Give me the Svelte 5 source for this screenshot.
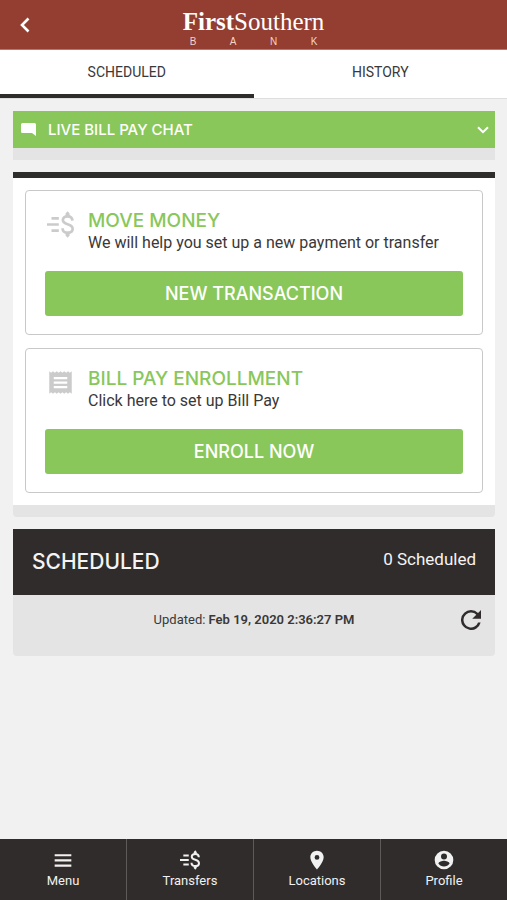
<script lang="ts">
	type Tab = 'scheduled' | 'history';

	let activeTab: Tab = $state('scheduled');
	let updatedAt = $state('Feb 19, 2020 2:36:27 PM');

	const TABS: { id: Tab; label: string }[] = [
		{ id: 'scheduled', label: 'SCHEDULED' },
		{ id: 'history', label: 'HISTORY' },
	];

	const ACTIONS = [
		{
			icon: 'transfer',
			title: 'MOVE MONEY',
			text: 'We will help you set up a new payment or transfer',
			button: 'NEW TRANSACTION',
		},
		{
			icon: 'receipt',
			title: 'BILL PAY ENROLLMENT',
			text: 'Click here to set up Bill Pay',
			button: 'ENROLL NOW',
		},
	];

	const NAV = [
		{ icon: 'menu', label: 'Menu' },
		{ icon: 'transfer', label: 'Transfers' },
		{ icon: 'pin', label: 'Locations' },
		{ icon: 'profile', label: 'Profile' },
	];

	function refresh() {
		const now = new Date();
		const day = now.toLocaleDateString('en-US', { month: 'short', day: 'numeric', year: 'numeric' });
		updatedAt = `${day} ${now.toLocaleTimeString('en-US')}`;
	}
</script>

{#snippet icon(name: string)}
	<svg class="icon" viewBox="0 0 24 24" aria-hidden="true">
		{#if name === 'transfer'}
			<path
				d="M4 6.500h6.500M0 12h10.500M4 17.500h6.500"
				fill="none"
				stroke="currentColor"
				stroke-width="2.400"
			/>
			<path
				d="M22.600 8.600C22.500 6 20.700 4.700 18.300 4.700c-2.500 0-4.200 1.400-4.200 3.400 0 2.200 1.700 3 4.200 3.700 2.700.8 4.500 1.700 4.500 4 0 2.200-1.900 3.500-4.500 3.500-2.600 0-4.400-1.400-4.500-4"
				fill="none"
				stroke="currentColor"
				stroke-width="2.400"
			/>
			<path d="M16.500 4.500V2.300L18.300.3l1.800 2v2.200zM16.500 19.500v2.200l1.800 2 1.800-2v-2.200z" />
		{:else if name === 'receipt'}
			<path
				d="M18 17H6v-2h12v2zm0-4H6v-2h12v2zm0-4H6V7h12v2zM2 22l1.700-1.300L5.300 22 7 20.700 8.700 22l1.600-1.300L12 22l1.700-1.300 1.600 1.300 1.700-1.300 1.700 1.300 1.600-1.300L22 22V2l-1.700 1.300L18.700 2 17 3.300 15.300 2l-1.600 1.300L12 2l-1.700 1.300L8.700 2 7 3.300 5.300 2 3.700 3.300 2 2v20z"
			/>
		{:else if name === 'menu'}
			<path d="M2 20h20v-2.600H2V20zm0-6.200h20v-2.600H2v2.600zM2 5v2.600h20V5H2z" />
		{:else if name === 'pin'}
			<path
				d="M12 1C7.600 1 4 4.400 4 8.700 4 14.500 12 23.500 12 23.500s8-9 8-14.800C20 4.400 16.400 1 12 1zm0 10.800a2.900 2.900 0 1 1 0-5.800 2.900 2.900 0 0 1 0 5.800z"
			/>
		{:else if name === 'profile'}
			<path
				fill-rule="evenodd"
				d="M12 .8a11.200 11.200 0 1 0 0 22.400A11.200 11.200 0 0 0 12 .8zm0 3.300a3.600 3.600 0 1 1 0 7.200 3.600 3.600 0 0 1 0-7.200zm0 15.700c-2.800 0-5.300-1.400-6.700-3.600.1-2.200 4.500-3.400 6.700-3.400s6.600 1.200 6.700 3.400c-1.400 2.200-3.900 3.600-6.700 3.600z"
			/>
		{/if}
	</svg>
{/snippet}

<div class="app">
	<header class="topbar">
		<button class="back" aria-label="Back">
			<svg viewBox="0 0 10 16" aria-hidden="true">
				<path d="M8.500 1.500 2 8l6.500 6.500" fill="none" stroke="currentColor" stroke-width="2.600" />
			</svg>
		</button>
		<div class="logo">
			<div class="logo-name"><b>First</b>Southern</div>
			<div class="logo-bank">
				{#each 'BANK' as letter}<span>{letter}</span>{/each}
			</div>
		</div>
	</header>

	<nav class="tabs">
		{#each TABS as tab}
			<button class="tab" class:active={activeTab === tab.id} onclick={() => (activeTab = tab.id)}>
				{tab.label}
			</button>
		{/each}
	</nav>

	<main class="content">
		<section class="block chat">
			<button class="chat-btn">
				<svg class="chat-icon" viewBox="0 0 15 13" aria-hidden="true">
					<path d="M1.500 0h12A1.500 1.500 0 0 1 15 1.500V13l-4-3H1.500A1.500 1.500 0 0 1 0 8.500v-7A1.500 1.500 0 0 1 1.500 0z" />
				</svg>
				<span>LIVE BILL PAY CHAT</span>
				<svg class="chevron" viewBox="0 0 12 8" aria-hidden="true">
					<path d="m1 1.200 5 5 5-5" fill="none" stroke="currentColor" stroke-width="2" />
				</svg>
			</button>
		</section>

		<section class="block actions">
			<div class="cards">
				{#each ACTIONS as action}
					<article class="card">
						<div class="card-head">
							{@render icon(action.icon)}
							<div>
								<h2 class="card-title">{action.title}</h2>
								<p class="card-text">{action.text}</p>
							</div>
						</div>
						<button class="card-btn">{action.button}</button>
					</article>
				{/each}
			</div>
		</section>

		<section class="scheduled">
			<div class="scheduled-head">
				<h2 class="scheduled-title">SCHEDULED</h2>
				<span class="scheduled-count">0 Scheduled</span>
			</div>
			<div class="scheduled-body">
				<span class="updated">Updated: <b>{updatedAt}</b></span>
				<button class="refresh" aria-label="Refresh" onclick={refresh}>
					<svg viewBox="4 4 16 16" aria-hidden="true">
						<path
							d="M17.650 6.350A7.958 7.958 0 0 0 12 4a8 8 0 1 0 7.730 10h-2.080A6 6 0 1 1 12 6c1.660 0 3.140.690 4.220 1.780L13 11h7V4l-2.350 2.350z"
						/>
					</svg>
				</button>
			</div>
		</section>
	</main>

	<nav class="bottombar">
		{#each NAV as item}
			<button class="nav-btn">
				{@render icon(item.icon)}
				<span>{item.label}</span>
			</button>
		{/each}
	</nav>
</div>

<style>
	:global(body) {
		background: #f1f1f1;
	}
	.app {
		display: flex;
		flex-direction: column;
		min-height: 100vh;
		font-family: Roboto, 'Liberation Sans', sans-serif;
		color: #3a3838;
	}
	button {
		border: 0;
		padding: 0;
		background: none;
		font-family: inherit;
		color: inherit;
		cursor: pointer;
	}
	svg {
		display: block;
		fill: currentColor;
	}
	h2,
	p {
		margin: 0;
	}
	.topbar {
		display: grid;
		grid-template-columns: 50px 1fr 50px;
		align-items: center;
		height: 50px;
		box-sizing: border-box;
		border-bottom: 1px solid #b87868;
		background: #933e30;
		color: #fff;
	}
	.back {
		display: flex;
		justify-content: center;
		height: 100%;
		align-items: center;
	}
	.back svg {
		width: 10px;
		height: 16px;
	}
	.logo {
		justify-self: center;
		padding-top: 4px;
	}
	.logo-name {
		font-family: 'Liberation Serif', serif;
		font-size: 25px;
		line-height: 30px;
	}
	.logo-bank {
		display: flex;
		justify-content: space-between;
		padding: 0 7px;
		font-family: 'Liberation Sans', sans-serif;
		font-size: 10px;
		line-height: 10px;
		color: #f3d3c8;
	}
	.tabs {
		display: flex;
		height: 49px;
		box-sizing: border-box;
		background: #fff;
		border-bottom: 1px solid #dedede;
	}
	.tab {
		flex: 1;
		padding-bottom: 1px;
		border-bottom: 4px solid transparent;
		font-size: 14px;
	}
	.tab.active {
		border-bottom-color: #2f2c2c;
	}
	.content {
		flex: 1;
		display: flex;
		flex-direction: column;
		gap: 12px;
		padding: 12px 12px 12px 13px;
	}
	.block {
		border-bottom: 12px solid #e4e4e4;
	}
	.chat-btn {
		display: flex;
		align-items: center;
		gap: 12px;
		width: 100%;
		height: 37px;
		padding: 0 6px 0 8px;
		background: #89c75b;
		color: #fff;
		font-family: Inter, sans-serif;
		font-size: 15px;
		font-weight: 500;
	}
	.chat-icon {
		width: 15px;
		height: 13px;
	}
	.chevron {
		width: 12px;
		height: 8px;
		margin-left: auto;
	}
	.actions {
		border-radius: 0 0 4px 4px;
	}
	.cards {
		display: flex;
		flex-direction: column;
		gap: 13px;
		padding: 12px;
		border-top: 6px solid #2f2c2c;
		background: #fff;
	}
	.card {
		padding: 18px 19px;
		border: 1px solid #c8c8c8;
		border-radius: 4px;
	}
	.card-head {
		display: flex;
		gap: 14px;
		margin-bottom: 18px;
	}
	.card-head .icon {
		flex: none;
		width: 27px;
		height: 27px;
		margin: 2px 0 0 2px;
		color: #cbcbcb;
	}
	.card-title {
		font-family: Inter, sans-serif;
		font-size: 19px;
		font-weight: 500;
		line-height: 24px;
		color: #89c75b;
	}
	.card-text {
		font-size: 16px;
		line-height: 20px;
	}
	.card-btn {
		width: 100%;
		height: 45px;
		border-radius: 3px;
		background: #89c75b;
		color: #fff;
		font-family: Inter, sans-serif;
		font-size: 18px;
		font-weight: 500;
	}
	.scheduled-head {
		display: flex;
		align-items: center;
		justify-content: space-between;
		height: 66px;
		box-sizing: border-box;
		padding: 0 19px 2px;
		background: #302c2b;
		color: #f4f4f4;
	}
	.scheduled-title {
		font-family: Inter, sans-serif;
		font-size: 21px;
		font-weight: 500;
	}
	.scheduled-count {
		padding-bottom: 4px;
		font-size: 17px;
	}
	.scheduled-body {
		display: grid;
		grid-template-columns: 1fr auto 1fr;
		align-items: center;
		height: 61px;
		box-sizing: border-box;
		padding: 0 14px 12px;
		border-radius: 0 0 4px 4px;
		background: #e4e4e4;
	}
	.updated {
		grid-column: 2;
		font-size: 13px;
	}
	.updated b {
		font-weight: 600;
	}
	.refresh {
		justify-self: end;
		color: #302c2b;
	}
	.refresh svg {
		width: 20px;
		height: 20px;
	}
	.bottombar {
		position: sticky;
		bottom: 0;
		display: flex;
		height: 61px;
		background: #302c2b;
	}
	.nav-btn {
		flex: 1;
		display: flex;
		flex-direction: column;
		align-items: center;
		justify-content: center;
		gap: 2px;
		color: #f1f1f1;
		font-size: 13px;
		line-height: 18px;
	}
	.nav-btn + .nav-btn {
		border-left: 1px solid #5d5a59;
	}
	.nav-btn .icon {
		width: 20px;
		height: 20px;
	}
</style>
